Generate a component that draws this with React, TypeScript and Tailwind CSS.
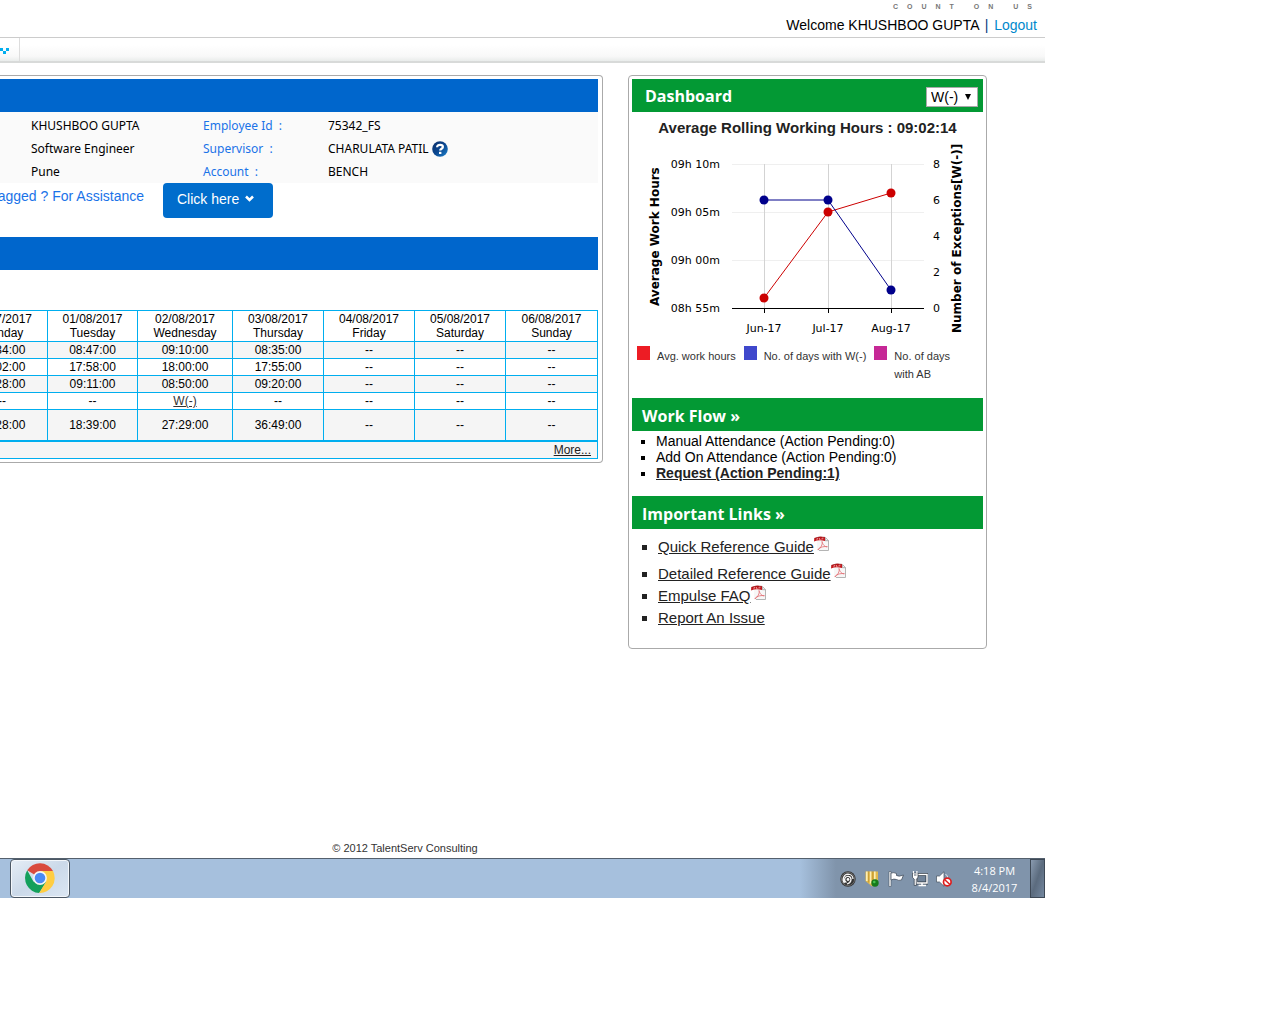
import React from "react";

const ui = "font-['Open_Sans','Noto_Sans',sans-serif]";

type Day = { date: string; day: string; values: string[] };

const days: Day[] = [
  { date: "31/07/2017", day: "Monday", values: ["08:34:00", "18:02:00", "09:28:00", "--", "09:28:00"] },
  { date: "01/08/2017", day: "Tuesday", values: ["08:47:00", "17:58:00", "09:11:00", "--", "18:39:00"] },
  { date: "02/08/2017", day: "Wednesday", values: ["09:10:00", "18:00:00", "08:50:00", "W(-)", "27:29:00"] },
  { date: "03/08/2017", day: "Thursday", values: ["08:35:00", "17:55:00", "09:20:00", "--", "36:49:00"] },
  { date: "04/08/2017", day: "Friday", values: ["--", "--", "--", "--", "--"] },
  { date: "05/08/2017", day: "Saturday", values: ["--", "--", "--", "--", "--"] },
  { date: "06/08/2017", day: "Sunday", values: ["--", "--", "--", "--", "--"] },
];

const columnWidths = ["w-[91px]", "w-[90px]", "w-[95px]", "w-[91px]", "w-[91px]", "w-[91px]", ""];

const details = [
  ["KHUSHBOO GUPTA", "Employee Id", "75342_FS"],
  ["Software Engineer", "Supervisor", "CHARULATA PATIL"],
  ["Pune", "Account", "BENCH"],
];

function HelpIcon() {
  return (
    <svg width="16" height="16" viewBox="0 0 16 16" aria-hidden="true">
      <defs>
        <linearGradient id="help" x1="0" y1="0" x2="1" y2="1">
          <stop offset="0" stopColor="#0d2f66" />
          <stop offset="0.5" stopColor="#0a4690" />
          <stop offset="1" stopColor="#1d83cc" />
        </linearGradient>
      </defs>
      <circle cx="8" cy="8" r="7.8" fill="url(#help)" />
      <path d="M5.1 6.300C5.100 4.400 6.400 3.800 8.100 3.800S10.900 4.600 10.900 6C10.900 7.800 8.200 7.700 8.200 9.600" fill="none" stroke="#fff" strokeWidth="2.200" />
      <rect x="7" y="10.800" width="2.400" height="2.200" fill="#fff" />
    </svg>
  );
}

function PdfIcon() {
  return (
    <svg className="inline-block align-baseline" width="16" height="16" viewBox="0 0 16 16" aria-hidden="true">
      <path d="M3 1h8.500l3 3.200v10.300H3z" fill="#f7f7f7" />
      <path d="M11.500 1.500l3 3.200v9.800H5" fill="none" stroke="#b4b4b4" />
      <path d="M11.300 1.500v3.200h3.200" fill="none" stroke="#999" strokeWidth=".8" />
      <path d="M.3 2.200Q5 -.3 11 1.200V5Q5 3.300 0 5.500z" fill="#c2171c" />
      <path d="M.3 2.400Q5 0 11 1.400" fill="none" stroke="#8f1013" strokeWidth=".6" />
      <path d="M3 2.400v1.600M3 2.400h1.200M5.500 2v1.700h1.200M8 3.700v-1.500h1.500" fill="none" stroke="#f4b5b5" strokeWidth=".7" />
      <path d="M8 5.500c1 2.500-1.500 7-4 8.400c-.2-1.900 5-3.900 9.400-3.200c-2.500.6-4.700-2.200-5.400-5.200z" fill="none" stroke="#e26a6e" strokeWidth=".8" />
    </svg>
  );
}

function Heading({ children }: { children: React.ReactNode }) {
  return (
    <h2 className={`${ui} h-[33px] bg-[#039934] pl-[10px] text-base leading-9 font-bold text-white`}>
      {children}
    </h2>
  );
}

const points = {
  red: [[136, 154], [200, 68], [263, 49]],
  blue: [[136, 56], [200, 56], [263, 146]],
};

function Chart() {
  return (
    <svg
      className="block font-['DejaVu_Sans',sans-serif]"
      width="351"
      height="198"
      viewBox="4 0 351 198"
      fontSize="11"
      role="img"
      aria-label="Average work hours and number of exceptions by month"
    >
      {[20, 68, 116].map((y) => (
        <path key={y} d={`M104 ${y + 0.5}H296`} stroke="#efefef" />
      ))}
      {[136, 200, 263].map((x) => (
        <path key={x} d={`M${x + 0.5} 20V164`} stroke="#d3d3d3" />
      ))}
      <path d="M104 164.500H296M136.500 164v5M200.500 164v5M263.500 164v5" stroke="#000" />
      <polyline points={points.red.join(" ")} fill="none" stroke="#cc0000" />
      <polyline points={points.blue.join(" ")} fill="none" stroke="#00008b" />
      {points.red.map(([x, y]) => (
        <circle key={x} cx={x} cy={y} r="4.500" fill="#cc0000" />
      ))}
      {points.blue.map(([x, y]) => (
        <circle key={x} cx={x} cy={y} r="4.500" fill="#00008b" />
      ))}
      {["09h 10m", "09h 05m", "09h 00m", "08h 55m"].map((t, i) => (
        <text key={t} x="92" y={24 + i * 48} textAnchor="end">{t}</text>
      ))}
      {["8", "6", "4", "2", "0"].map((t, i) => (
        <text key={t} x="305" y={24 + i * 36}>{t}</text>
      ))}
      <text x="136" y="188" textAnchor="middle">Jun-17</text>
      <text x="200" y="188" textAnchor="middle">Jul-17</text>
      <text x="263" y="188" textAnchor="middle">Aug-17</text>
      <text transform="translate(31 162) rotate(-90)" fontSize="12" fontWeight="bold">Average Work Hours</text>
      <text transform="translate(333 189) rotate(-90)" fontSize="12" fontWeight="bold">Number of Exceptions[W(-)]</text>
    </svg>
  );
}

function ChromeLogo() {
  return (
    <svg className="mb-[2px]" width="30" height="30" viewBox="0 0 30 30" aria-hidden="true">
      <path d="M15 15L2.200 7.300A15 15 0 0 1 28 7.900z" fill="#d94a3d" />
      <path d="M15 15L8.500 18.700 2.200 7.300A15 15 0 0 0 14.200 30L21.500 18.500z" fill="#13a05c" />
      <path d="M15 8.100H28A15 15 0 0 1 14.200 30L21.200 18.500z" fill="#ffcd42" />
      <circle cx="15" cy="15" r="6.900" fill="#f5f5f5" />
      <circle cx="15" cy="15" r="5.300" fill="#4a8af4" />
    </svg>
  );
}

function TrayIcons() {
  return (
    <div className="flex items-center gap-2">
      <svg width="16" height="16" viewBox="0 0 16 16" aria-hidden="true">
        <circle cx="8" cy="8" r="7.700" fill="#333" />
        <circle cx="8" cy="8" r="6.600" fill="none" stroke="#777" strokeWidth=".8" />
        <path d="M4.500 12A5.300 5.300 0 0 1 8 3.200A5 5 0 0 1 13 8M6.500 11.500A3.200 3.200 0 1 1 11 8.800Q10.500 12 7 13" fill="none" stroke="#f4f4f4" strokeWidth="1.300" />
        <circle cx="8" cy="8.500" r="1.400" fill="#fff" />
      </svg>
      <svg width="16" height="16" viewBox="0 0 16 16" aria-hidden="true">
        <path d="M1.500 .5h12.500v10L8 15.500 1.500 10z" fill="#e2b94c" />
        <path d="M2.800 .5v9.500M6.500 .5v12M10.800 .5v12" stroke="#fdeeb4" strokeWidth="1.600" />
        <path d="M4.800 .5v11M8.800 .5v12" stroke="#b98b24" strokeWidth=".8" />
        <circle cx="11" cy="12" r="3.700" fill="#167a1b" />
        <circle cx="10.300" cy="11" r="1.300" fill="#49c44d" />
      </svg>
      <svg width="16" height="16" viewBox="0 0 16 16" aria-hidden="true">
        <path d="M1 .5h2v15H1z" fill="#fff" stroke="#45515f" strokeWidth=".6" />
        <path d="M3 2Q6 1 8.500 2.500V4.500Q11 6 15.500 4L13.500 9Q10.500 10 8.500 8.500Q6 7.500 3 9z" fill="#fff" stroke="#45515f" strokeWidth=".8" />
      </svg>
      <svg width="16" height="16" viewBox="0 0 16 16" aria-hidden="true">
        <path d="M4.500 3.500H15V12H4.500z" fill="#71849a" stroke="#303b47" strokeWidth="3" />
        <path d="M4.500 3.500H15V12H4.500zM10 12v2M6.500 14.500h7.500" fill="none" stroke="#fff" strokeWidth="1.500" />
        <path d="M.5 2h5.500v4.500L4.300 8v6.500H2.200V8L.5 6.500z" fill="#fff" stroke="#303b47" strokeWidth=".7" />
        <path d="M1.500 0v2.500M4.900 0v2.500" fill="none" stroke="#fff" strokeWidth="1.200" />
        <path d="M2 4h2.500" stroke="#4e5c6b" />
      </svg>
      <svg width="16" height="16" viewBox="0 0 16 16" aria-hidden="true">
        <path d="M.5 5h3L8 .7v14.600L3.500 11h-3z" fill="#fff" stroke="#45515f" strokeWidth=".7" />
        <path d="M9.500 3Q12 5 11.700 7" fill="none" stroke="#dfe5eb" />
        <circle cx="11.300" cy="11" r="3.800" fill="#fff" stroke="#dd1d1d" strokeWidth="1.700" />
        <path d="M8.600 8.500l5.300 5" stroke="#dd1d1d" strokeWidth="1.600" />
      </svg>
    </div>
  );
}

function EmployeePanel() {
  return (
    <section className="min-w-0 flex-1 overflow-hidden rounded-r border border-l-0 border-[#aaa] pt-[3px] pr-1 pb-[3px]">
      <div className="h-[33px] bg-[#0066cc]" />
      <dl className="bg-[#fafafa] pt-[2px] pl-[31px] font-['Noto_Sans','Open_Sans',sans-serif] text-xs leading-[23px]">
        {details.map(([own, label, value]) => (
          <div key={label} className="grid grid-cols-[172px_125px_1fr]">
            <dd>{own}</dd>
            <dt className="text-[#1a73e8]">{label}&nbsp; :</dt>
            <dd className="flex items-center gap-[3px]">
              {value}
              {label === "Supervisor" && (
                <button type="button" aria-label="Supervisor help"><HelpIcon /></button>
              )}
            </dd>
          </div>
        ))}
      </dl>
      <div className="flex h-[54px] items-start gap-[19px]">
        <p className="flex w-36 justify-end pt-[3px] text-sm whitespace-nowrap text-[#1a73e8]">Tagged ? For Assistance</p>
        <button type="button" className="flex h-[35px] w-[110px] items-center gap-[6px] rounded bg-[#006dcc] pb-1 pl-[14px] text-sm text-white">
          Click here
          <svg width="9" height="7" viewBox="0 0 9 7" aria-hidden="true">
            <path d="M1 1.500l3.500 3.500L8 1.500" fill="none" stroke="#fff" strokeWidth="2.500" />
          </svg>
        </button>
      </div>
      <div className="h-[33px] bg-[#0066cc]" />
      <div className="mt-10 -ml-11">
        <table className="w-full table-fixed border-collapse text-center text-xs leading-[14px]">
          <thead>
            <tr className="h-[31px]">
              {days.map((d, i) => (
                <th key={d.date} scope="col" className={`${columnWidths[i]} border border-[#00aeef] p-0 pb-px font-normal`}>
                  {d.date}<br />{d.day}
                </th>
              ))}
            </tr>
          </thead>
          <tbody>
            {[0, 1, 2, 3, 4].map((row) => (
              <tr key={row} className={`${row === 4 ? "h-[31px]" : "h-[17px]"} ${row % 2 === 0 ? "bg-[#f5f5f5]" : "bg-white"}`}>
                {days.map((d) => (
                  <td key={d.date} className="border border-[#00aeef] p-0">
                    {d.values[row] === "W(-)" ? <a href="#exception" className="text-[#333] underline">W(-)</a> : d.values[row]}
                  </td>
                ))}
              </tr>
            ))}
          </tbody>
          <tfoot>
            <tr className="h-[18px] bg-[#f5f5f5]">
              <td colSpan={7} className="border border-t-2 border-[#00aeef] p-0 pr-[6px] text-right">
                <a href="#more" className="text-[#222] underline">More...</a>
              </td>
            </tr>
          </tfoot>
        </table>
      </div>
    </section>
  );
}

function DashboardPanel() {
  return (
    <section className="w-[359px] shrink-0 rounded border border-[#aaa] p-[3px] pb-[19px]">
      <div className="flex h-[33px] items-center justify-between bg-[#039934] pr-[5px] pl-[13px]">
        <h2 className={`${ui} text-base font-bold text-white`}>Dashboard</h2>
        <div className="relative mt-[2px]">
          <select aria-label="Exception type" className="block h-5 w-[52px] appearance-none border border-[#a9a9a9] bg-white pl-1 text-sm leading-[18px]">
            <option>W(-)</option>
            <option>AB</option>
          </select>
          <svg className="pointer-events-none absolute top-[7px] right-[7px]" width="6" height="6" viewBox="0 0 6 6" aria-hidden="true">
            <path d="M0 0h6L3 6z" fill="#000" />
          </svg>
        </div>
      </div>
      <p className="h-8 text-center text-[15px] leading-8 font-bold text-[#222]">Average Rolling Working Hours : 09:02:14</p>
      <Chart />
      <ul className="flex h-[56px] gap-2 pt-1 pl-[5px] text-[11px] leading-[18px] text-[#333]">
        <li className="flex gap-[7px]"><span className="h-[14px] w-[13px] bg-[#ed1c24]" /><span className="pt-px">Avg. work hours</span></li>
        <li className="flex gap-[7px]"><span className="h-[14px] w-[13px] bg-[#3f48cc]" /><span className="pt-px">No. of days with W(-)</span></li>
        <li className="flex gap-[7px]"><span className="h-[14px] w-[13px] bg-[#c62896]" /><span className="w-[60px] pt-px">No. of days with AB</span></li>
      </ul>
      <Heading>Work Flow »</Heading>
      <ul className="h-[65px] list-[square] pt-[2px] pl-6 text-sm leading-4">
        <li>Manual Attendance (Action Pending:0)</li>
        <li>Add On Attendance (Action Pending:0)</li>
        <li><a href="#request" className="font-bold text-[#222] underline">Request (Action Pending:1)</a></li>
      </ul>
      <Heading>Important Links »</Heading>
      <ul className="list-[square] pt-[7px] pl-[26px] text-[15px] leading-[22px] text-[#222]">
        {["Quick Reference Guide", "Detailed Reference Guide", "Empulse FAQ", "Report An Issue"].map((t, i) => (
          <li key={t} className={i === 0 ? "mb-[5px]" : ""}>
            <a href="#guide" className="underline">{t}</a>
            {i < 3 && <PdfIcon />}
          </li>
        ))}
      </ul>
    </section>
  );
}

export default function App() {
  return (
    <div className="bg-white pr-[235px] font-['Liberation_Sans',Arial,sans-serif] text-black">
      <header className="flex h-[37px] flex-col items-end">
        <p className="h-[14px] pr-1 text-[7px] leading-[14px] font-bold tracking-[9px] text-[#777]">COUNT ON US</p>
        <p className="pr-2 text-sm leading-[22px]">
          Welcome KHUSHBOO GUPTA <span className="px-[2px] text-[#003c7d]">|</span> <a href="#logout" className="text-[#0088cc]">Logout</a>
        </p>
      </header>
      <nav className="h-[26px] border-t border-b-2 border-t-[#ccc] border-b-[#d8dad9] bg-linear-to-b from-white from-30% via-[#f8f8f8] via-80% to-[#e9eceb]">
        <button type="button" aria-label="Open menu" className="flex h-full w-5 items-center border-r border-[#ddd] pt-[2px]">
          <svg width="9" height="6" viewBox="0 0 9 6" shapeRendering="crispEdges" aria-hidden="true">
            <path d="M0 0h3v3H0zM3 3h3v3H3zM6 0h3v3H6z" fill="#00aeef" />
          </svg>
        </button>
      </nav>
      <main className="flex items-start gap-[25px] pt-3 pr-[58px]">
        <EmployeePanel />
        <DashboardPanel />
      </main>
      <footer>
        <p className="mt-[190px] h-[19px] pr-[235px] text-center text-[11px] leading-[18px] text-[#333]">© 2012 TalentServ Consulting</p>
        <div className="flex h-10 border-t border-[#54606d] bg-[#a6c0dd]">
          <button type="button" aria-label="Google Chrome" className="ml-[10px] flex w-[60px] items-center justify-center rounded-sm border border-[#4c5865] bg-linear-to-br from-[#e6eef6] via-[#cbd9e9] to-[#dce7f3] shadow-[inset_0_0_0_1px_#f3f7fb]">
            <ChromeLogo />
          </button>
          <div className="ml-auto flex items-center bg-[linear-gradient(90deg,#a6c0dd_0,#8094ab_36px)] pl-10">
            <TrayIcons />
            <p className={`${ui} w-[78px] pl-[7px] text-center text-[11px] leading-[17px] text-white`}>4:18 PM<br />8/4/2017</p>
          </div>
          <button type="button" aria-label="Show desktop" className="w-[15px] border border-[#3d4855] bg-linear-to-br from-[#8a9bb0] via-[#5b6b7e] to-[#7488a0]" />
        </div>
      </footer>
    </div>
  );
}
